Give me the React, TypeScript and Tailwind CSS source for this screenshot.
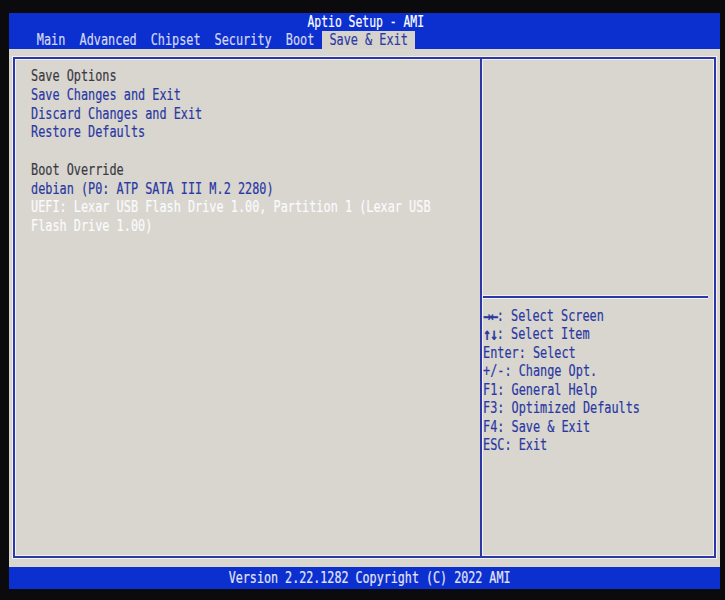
import React from "react";

const mono = "font-['DejaVu_Sans_Mono','Liberation_Mono',monospace]";

// One line of narrow firmware-style text: a tall mono face squeezed horizontally.
function Line({
  children,
  className = "",
  tall = false,
}: {
  children: React.ReactNode;
  className?: string;
  tall?: boolean;
}) {
  return (
    <div className={`${tall ? "h-[18.75px] leading-[18.75px]" : "h-[18.45px] leading-[18.45px]"} whitespace-nowrap`}>
      <span className={`inline-block origin-left scale-x-[0.79] [-webkit-text-stroke:0.2px_currentColor] ${className}`}>
        {children}
      </span>
    </div>
  );
}

function Tab({ label, width, active = false }: { label: string; width: string; active?: boolean }) {
  return (
    <div
      className={`${width} h-full flex items-center justify-center shrink-0 ${
        active ? "bg-[#d6d3cd] text-[#2b3aa6]" : "text-[#d4d8f2]"
      }`}
    >
      <span className="shrink-0 whitespace-nowrap inline-block origin-center scale-x-[0.79] [-webkit-text-stroke:0.2px_currentColor]">
        {label}
      </span>
    </div>
  );
}

// Bold navigation arrows in the key legend.
function Keys({ children }: { children: React.ReactNode }) {
  return (
    <b className="inline-block align-top h-[18.45px] leading-[18.45px] font-bold text-[17px] tracking-[-1.5px]">
      {children}
    </b>
  );
}

export default function App() {
  return (
    <div className={`w-[725px] h-[600px] bg-[#0b0b0d] overflow-hidden pt-[13px] pl-[9px] ${mono} text-[15px]`}>
      <div className="w-[711px] h-[576px] flex flex-col">
        {/* title bar and menu tabs */}
        <div className="h-[36px] bg-[#0c2fcf] flex flex-col">
          <div className="h-[18px] flex items-center justify-center text-white leading-[18px] pl-[2px]">
            <span className="shrink-0 whitespace-nowrap inline-block origin-center scale-x-[0.76] [-webkit-text-stroke:0.2px_currentColor]">
              Aptio Setup - AMI
            </span>
          </div>
          <div className="h-[18px] flex pl-[21px] leading-[18px]">
            <Tab label="Main" width="w-[43px]" />
            <Tab label="Advanced" width="w-[71px]" />
            <Tab label="Chipset" width="w-[64px]" />
            <Tab label="Security" width="w-[71px]" />
            <Tab label="Boot" width="w-[43px]" />
            <Tab label="Save & Exit" width="w-[93px]" active />
          </div>
        </div>

        {/* main panel */}
        <div className="flex-1 bg-[#d9d6d0] px-[4px] pt-[8px] pb-[9px]">
          <div className="h-full flex border-2 border-[#2c37a8] shadow-[0_0_0_1px_#f2f2f6,inset_0_0_0_1px_#f2f2f6]">
            {/* item list */}
            <div className="w-[467px] shrink-0 pl-[16px] pt-[8px] border-r-2 border-[#2c37a8] shadow-[1px_0_0_0_#f2f2f6]">
              <Line tall className="text-[#3a3a44]">Save Options</Line>
              <Line tall className="text-[#2a38a2]">Save Changes and Exit</Line>
              <Line tall className="text-[#2a38a2]">Discard Changes and Exit</Line>
              <Line tall className="text-[#2a38a2]">Restore Defaults</Line>
              <Line tall>{"\u00a0"}</Line>
              <Line tall className="text-[#3a3a44]">Boot Override</Line>
              <Line tall className="text-[#2a38a2]">debian (P0: ATP SATA III M.2 2280)</Line>
              <Line tall className="text-[#fbfbfd]">UEFI: Lexar USB Flash Drive 1.00, Partition 1 (Lexar USB</Line>
              <Line tall className="text-[#fbfbfd]">Flash Drive 1.00)</Line>
            </div>

            {/* help column */}
            <div className="flex-1 flex flex-col pl-[1px] shadow-[inset_1px_0_0_0_#f2f2f6]">
              <div className="h-[237px] shrink-0" />
              <div className="h-[2px] bg-[#2c37a8] mr-[6px] shadow-[0_1px_0_0_#f2f2f6,0_-1px_0_0_#f2f2f6]" />
              <div className="pt-[9px] text-[#2a38a2]">
                <Line>
                  <Keys>→←</Keys>: Select Screen
                </Line>
                <Line>
                  <Keys>↑↓</Keys>: Select Item
                </Line>
                <Line>Enter: Select</Line>
                <Line>+/-: Change Opt.</Line>
                <Line>F1: General Help</Line>
                <Line>F3: Optimized Defaults</Line>
                <Line>F4: Save &amp; Exit</Line>
                <Line>ESC: Exit</Line>
              </div>
            </div>
          </div>
        </div>

        {/* version footer */}
        <div className="h-[22px] bg-[#0c2fcf] flex items-center justify-center text-[#e4e6f6] leading-[22px] pl-[10px]">
          <span className="shrink-0 whitespace-nowrap inline-block origin-center scale-x-[0.78] [-webkit-text-stroke:0.2px_currentColor]">
            Version 2.22.1282 Copyright (C) 2022 AMI
          </span>
        </div>
      </div>
    </div>
  );
}
